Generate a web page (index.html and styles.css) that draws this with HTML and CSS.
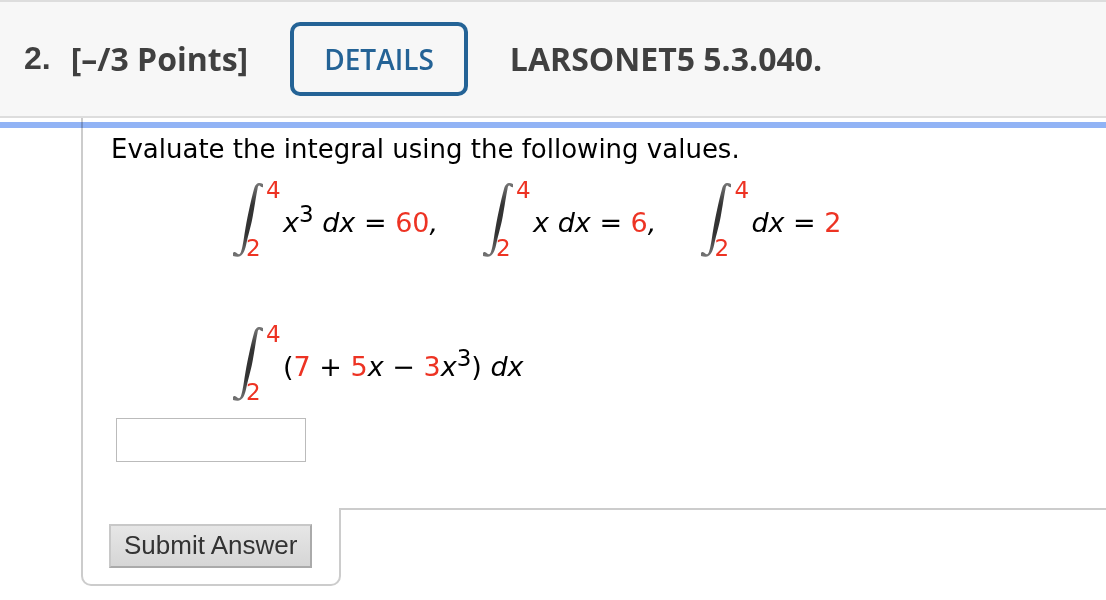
FILE: index.html
```html
<!DOCTYPE html>
<html lang="en">
<head>
  <meta charset="UTF-8">
  <title>Question 2 - LARSONET5 5.3.040.</title>
  <link rel="stylesheet" href="styles.css">
</head>
<body>
  <svg class="defs" aria-hidden="true">
    <defs>
      <linearGradient id="stroke" x1="0" y1="0" x2="0" y2="1">
        <stop offset="0" stop-color="#777"/>
        <stop offset="0.3" stop-color="#333"/>
        <stop offset="0.7" stop-color="#333"/>
        <stop offset="1" stop-color="#777"/>
      </linearGradient>
      <symbol id="integral" viewBox="0 0 30 76">
        <path fill="url(#stroke)" d="M30 2C26 0 22.500 1 21 7C18 18 15 32 12.500 46C10.500 58 9.500 67 7.500 71C6 73.500 4 71.500 3 70.500C1.500 69.500 0 70 0 71.500V74C2 74.500 4 75 6 74.500C10 73.500 12 69 13.500 61C16 50 18.500 42 20 33C22 22 23 14 24.500 7C25 3.500 26 3 27 4C28 5 29 5.500 30 5Z"/>
      </symbol>
    </defs>
  </svg>

  <div class="question-header">
    <h2 class="question-title"><span class="number">2.</span> <span>[–/3 Points]</span></h2>
    <button class="details" type="button">DETAILS</button>
    <strong class="source">LARSONET5 5.3.040.</strong>
  </div>

  <form class="question">
    <div class="marker"></div>
    <div class="question-body">
      <label class="prompt" for="answer">Evaluate the integral using the following values.</label>

      <div class="formulas">
        <div class="formula">
          <div class="integral">
            <svg><use href="#integral"/></svg>
            <span class="upper">4</span>
            <span class="lower">2</span>
          </div>
          <div class="expr"><i>x</i><sup>3</sup> <i>dx</i> = <b>60</b><i>,</i></div>
        </div>
        <div class="formula">
          <div class="integral">
            <svg><use href="#integral"/></svg>
            <span class="upper">4</span>
            <span class="lower">2</span>
          </div>
          <div class="expr"><i>x</i> <i>dx</i> = <b>6</b><i>,</i></div>
        </div>
        <div class="formula">
          <div class="integral">
            <svg><use href="#integral"/></svg>
            <span class="upper">4</span>
            <span class="lower">2</span>
          </div>
          <div class="expr"><i>dx</i> = <b>2</b></div>
        </div>
      </div>

      <div class="formulas">
        <div class="formula">
          <div class="integral">
            <svg><use href="#integral"/></svg>
            <span class="upper">4</span>
            <span class="lower">2</span>
          </div>
          <div class="expr">(<b>7</b> + <b>5</b><i>x</i> − <b>3</b><i>x</i><sup>3</sup>) <i>dx</i></div>
        </div>
      </div>

      <input class="answer" id="answer" type="text">
    </div>

    <div class="question-footer">
      <div class="submit-tab">
        <button class="submit" type="submit">Submit Answer</button>
      </div>
      <div class="footer-line"></div>
    </div>
  </form>
</body>
</html>
```

FILE: styles.css
```css
* {
  box-sizing: border-box;
}

body {
  margin: 0;
  background-color: #fff;
  color: #000;
  font-family: Verdana, "DejaVu Sans", sans-serif;
  font-size: 26px;
}

.defs {
  position: absolute;
  width: 0;
  height: 0;
}

/* header */
.question-header {
  display: flex;
  align-items: center;
  gap: 42px;
  padding: 20px 24px;
  background-color: #f7f7f7;
  border-top: 2px solid #ddd;
  border-bottom: 2px solid #ddd;
  color: #404040;
  font-family: "Open Sans", sans-serif;
  font-size: 32px;
  line-height: 42px;
}

.question-title {
  display: flex;
  gap: 20px;
  margin: 0;
  font-size: 32px;
  font-weight: 700;
}

.number {
  font-family: Arial, "Liberation Sans", sans-serif;
  line-height: 40px;
}

.details {
  height: 74px;
  padding: 0 30px;
  background-color: transparent;
  border: 4px solid #246396;
  border-radius: 10px;
  color: #246396;
  font-family: "Open Sans", sans-serif;
  font-size: 28px;
  font-weight: 600;
  cursor: pointer;
}

/* question */
.question {
  position: relative;
  padding-left: 81px;
}

.marker {
  position: absolute;
  top: 4px;
  left: 0;
  right: 0;
  height: 6px;
  background-color: #91b3f5;
  mix-blend-mode: multiply;
}

.question-body {
  padding: 14px 28px 46px;
  border-left: 2px solid #ccc;
}

.prompt {
  display: block;
  line-height: 34px;
}

.formulas {
  display: flex;
  flex-wrap: wrap;
  gap: 45px;
  margin-bottom: 68px;
  padding: 16px 0 0 122px;
}

.formulas + .formulas {
  margin: 0;
  padding-top: 0;
}

.formula {
  display: flex;
  align-items: center;
  gap: 20px;
}

.integral {
  position: relative;
  width: 30px;
  height: 76px;
  color: #ed3323;
  font-size: 23px;
  line-height: 22px;
}

.integral svg {
  display: block;
  width: 30px;
  height: 76px;
}

.upper {
  position: absolute;
  top: -3px;
  left: 33px;
}

.lower {
  position: absolute;
  top: 55px;
  left: 13px;
}

.expr {
  padding-top: 5px;
  font-size: 27px;
  line-height: 34px;
}

.expr b {
  color: #ed3323;
  font-weight: 400;
}

.expr sup {
  font-size: 23px;
  line-height: 0;
}

.answer {
  display: block;
  width: 190px;
  height: 44px;
  margin: 16px 5px 0;
  padding: 4px 8px;
  border: 1px solid #bbb;
  font: inherit;
}

/* footer */
.question-footer {
  display: flex;
  align-items: flex-start;
}

.submit-tab {
  padding: 16px 27px 16px 26px;
  border: 2px solid #ccc;
  border-top: 0;
  border-radius: 0 0 10px 10px;
}

.footer-line {
  flex: 1;
  margin-left: -2px;
  border-top: 2px solid #ccc;
}

.submit {
  display: block;
  height: 44px;
  padding: 0 13px 2px;
  background: linear-gradient(#e6e6e6, #d6d6d6);
  border: 2px solid;
  border-color: #c8c8c8 #aaa #aaa #c8c8c8;
  color: #333;
  font-family: Arial, "Liberation Sans", sans-serif;
  font-size: 26px;
  cursor: pointer;
}
```
